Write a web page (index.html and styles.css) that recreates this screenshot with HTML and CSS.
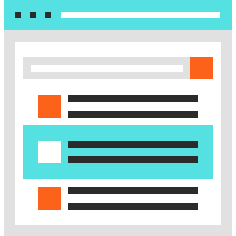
FILE: index.html
```html
<!DOCTYPE html>
<html>
<head>
<meta charset="utf-8">
<link rel="stylesheet" href="styles.css">
</head>
<body>
<div class="window">
  <div class="titlebar">
    <span class="dot"></span><span class="dot"></span><span class="dot"></span>
    <span class="address"></span>
  </div>
  <div class="frame">
    <div class="panel">
      <div class="search">
        <div class="field"><div class="field-inner"></div></div>
        <div class="search-btn"></div>
      </div>
      <div class="row row-first">
        <div class="thumb"></div>
        <div class="lines"><div class="line"></div><div class="line"></div></div>
      </div>
      <div class="row row-active">
        <div class="thumb thumb-white"></div>
        <div class="lines"><div class="line"></div><div class="line"></div></div>
      </div>
      <div class="row row-last">
        <div class="thumb"></div>
        <div class="lines"><div class="line"></div><div class="line"></div></div>
      </div>
    </div>
  </div>
</div>
</body>
</html>
```
FILE: styles.css
```css
html, body {
  margin: 0;
  padding: 0;
  background: #ffffff;
}
.window {
  margin-left: 4px;
  width: 228px;
  height: 236px;
  display: flex;
  flex-direction: column;
}
.titlebar {
  height: 30px;
  flex: none;
  background: #55e0e1;
  display: flex;
  align-items: center;
  padding: 0 12px 0 11px;
  gap: 9px;
}
.dot {
  width: 6px;
  height: 6px;
  background: #2b2b2b;
  flex: none;
}
.address {
  flex: 1;
  height: 6px;
  background: #ffffff;
  margin-left: 1px;
}
.frame {
  flex: 1;
  background: #e1e1e1;
  padding: 12px 11px;
  display: flex;
}
.panel {
  flex: 1;
  background: #ffffff;
  padding: 15px 8px;
  display: flex;
  flex-direction: column;
}
.search {
  height: 22px;
  display: flex;
  margin-bottom: 16px;
}
.field {
  flex: 1;
  background: #e1e1e1;
  padding: 8px 7px 7px 8px;
  display: flex;
}
.field-inner {
  flex: 1;
  background: #ffffff;
}
.search-btn {
  width: 23px;
  background: #fd621b;
}
.row {
  display: flex;
  padding: 0 15px;
  gap: 7px;
}
.row-first {
  margin-bottom: 7px;
}
.row-active {
  background: #55e0e1;
  padding: 16px 15px;
}
.row-last {
  margin-top: 8px;
}
.thumb {
  width: 23px;
  height: 23px;
  background: #fd621b;
  flex: none;
}
.thumb-white {
  background: #ffffff;
  height: 22px;
}
.lines {
  flex: 1;
  display: flex;
  flex-direction: column;
  justify-content: space-between;
}
.line {
  height: 7px;
  background: #2b2b2b;
}
```
